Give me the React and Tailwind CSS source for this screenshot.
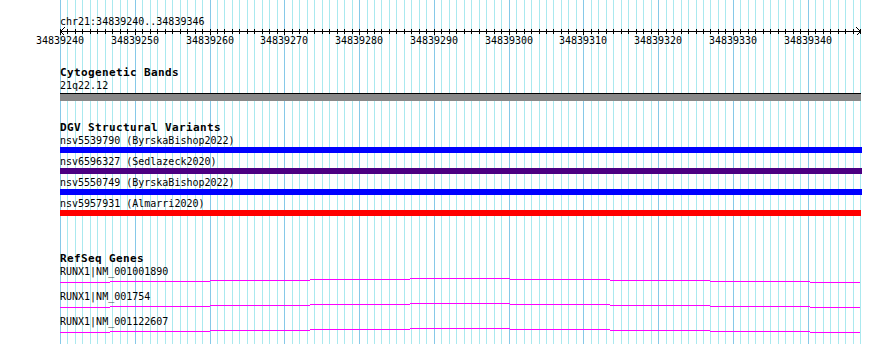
const START = 34839240;
const BP = 107;
const LEFT = 60;
const SPAN = 800;

// pixel column for base offset k
const px = (k) => Math.round(LEFT + (k * SPAN) / BP);
const cols = Array.from({ length: BP + 1 }, (_, k) => k);

const variants = [
  { id: 'nsv5539790 (ByrskaBishop2022)', color: 'bg-[#0000ff]', w: 'w-[802px]' },
  { id: 'nsv6596327 (Sedlazeck2020)', color: 'bg-[#4b0082]', w: 'w-[802px]' },
  { id: 'nsv5550749 (ByrskaBishop2022)', color: 'bg-[#0000ff]', w: 'w-[802px]' },
  { id: 'nsv5957931 (Almarri2020)', color: 'bg-[#ff0000]', w: 'w-[801px]' },
];

const genes = ['RUNX1|NM_001001890', 'RUNX1|NM_001754', 'RUNX1|NM_001122607'];

// step boundaries of the transcript line (relative to x=60) and their drop in px
const edges = [0, 50, 150, 250, 350, 450, 550, 650, 750, 800];
const drops = [4, 3, 2, 1, 0, 1, 2, 3, 4];

function Grid() {
  return (
    <svg className="absolute inset-0" width="890" height="344" shapeRendering="crispEdges">
      {cols.map((k) => (
        <line
          key={k}
          x1={px(k) + 0.5}
          x2={px(k) + 0.5}
          y1="0"
          y2="344"
          stroke={k % 10 === 0 ? '#86c9e8' : '#aae9ef'}
        />
      ))}
      {/* ruler */}
      <line x1="60" x2="861" y1="31.5" y2="31.5" stroke="#000" />
      {cols.map((k) => (
        <line key={k} x1={px(k) + 0.5} x2={px(k) + 0.5} y1="29" y2={k % 10 === 0 ? 35 : 34} stroke="#000" />
      ))}
      <polyline points="64.5,27.5 60.5,31.5 64.5,35.5" fill="none" stroke="#000" />
      <polyline points="856.5,27.5 860.5,31.5 856.5,35.5" fill="none" stroke="#000" />
      {cols
        .filter((k) => k % 10 === 0)
        .map((k) => (
          <text
            key={k}
            x={px(k)}
            y="44"
            textAnchor="middle"
            fontSize="10"
            fontFamily="'DejaVu Sans Mono', monospace"
            fill="#000"
          >
            {START + k}
          </text>
        ))}
    </svg>
  );
}

function Transcript() {
  return (
    <svg width="802" height="12" shapeRendering="crispEdges">
      {drops.map((d, i) => (
        <line key={i} x1={edges[i]} x2={edges[i + 1]} y1={d + 0.5} y2={d + 0.5} stroke="#ff00ff" />
      ))}
    </svg>
  );
}

export default function App() {
  return (
    <div className="relative w-[890px] h-[344px] overflow-hidden bg-white text-black font-['DejaVu_Sans_Mono',monospace]">
      <Grid />

      <div className="relative flex flex-col pl-[60px]">
        <div className="mt-[15px] text-[10px] leading-[13px]">chr21:34839240..34839346</div>

        {/* Cytogenetic Bands */}
        <div className="mt-[39px] text-[11px] leading-[12px] font-bold tracking-[0.38px]">Cytogenetic Bands</div>
        <div className="text-[10px] leading-[13px]">21q22.12</div>
        <div className="mt-[1px] w-[801px] h-[8px] border-t border-black bg-[#888888]" />

        {/* DGV Structural Variants */}
        <div className="mt-[20px] text-[11px] leading-[13px] font-bold tracking-[0.38px]">DGV Structural Variants</div>
        <div className="flex flex-col gap-[3px] pt-[1px]">
          {variants.map((v) => (
            <div key={v.id} className="flex flex-col">
              <div className="text-[10px] leading-[12px]">{v.id}</div>
              <div className={`h-[6px] ${v.w} ${v.color}`} />
            </div>
          ))}
        </div>

        {/* RefSeq Genes */}
        <div className="mt-[36px] text-[11px] leading-[13px] font-bold tracking-[0.38px]">RefSeq Genes</div>
        {genes.map((g) => (
          <div key={g} className="flex flex-col">
            <div className="text-[10px] leading-[13px]">{g}</div>
            <Transcript />
          </div>
        ))}
      </div>
    </div>
  );
}
